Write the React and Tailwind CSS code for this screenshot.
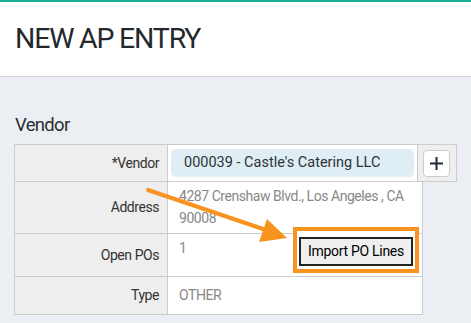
import React from "react";

const font = { fontFamily: "Roboto, 'Liberation Sans', sans-serif" };

const Label = ({ children, className = "" }) => (
  <div
    className={`w-[154px] shrink-0 border border-[#cccccc] bg-[#eeeeee] flex items-center justify-end pr-[8px] text-[14px] tracking-[-0.45px] text-[#333333] ${className}`}
  >
    {children}
  </div>
);

const Arrow = () => (
  <svg
    className="absolute left-0 top-0 pointer-events-none"
    width="471"
    height="323"
    viewBox="0 0 471 323"
  >
    <line x1="148" y1="190" x2="266" y2="230" stroke="#f7931e" strokeWidth="4" strokeLinecap="round" />
    <polygon points="259,242 267,219 287,238" fill="#f7931e" />
  </svg>
);

export default function App() {
  return (
    <div className="relative w-[471px] h-[323px] overflow-hidden bg-[#ebeef3]" style={font}>
      <div className="h-[2px] bg-[#17b396]" />
      <header className="h-[75px] bg-white border-b border-[#d5d5d5] flex items-center px-[15px]">
        <h1 className="text-[28.5px] leading-none text-[#24282c] tracking-[-1.2px]">NEW AP ENTRY</h1>
      </header>

      <section className="px-[14px] pt-[37px]">
        <h2 className="text-[18.5px] leading-[23px] text-[#2a2d31] pl-[1px] mb-[7px] tracking-[-0.7px]">Vendor</h2>

        <div className="flex h-[38px]">
          <Label className="pr-[4px]">*Vendor</Label>
          <div className="w-[256px] -ml-px border border-[#cccccc] bg-white px-[3px] py-[4px]">
            <div className="h-full rounded-[5px] bg-[#dfeef4] flex items-center pl-[13px] text-[14.5px] text-[#2f3337]">
              000039 - Castle's Catering LLC
            </div>
          </div>
          <div className="w-[41px] -ml-px border border-[#cccccc] bg-[#eeeeee] flex items-center justify-center">
            <button className="w-[27px] h-[27px] rounded-[4px] border border-[#cccccc] bg-white flex items-center justify-center">
              <svg width="15" height="15" viewBox="0 0 15 15">
                <path d="M7.5 1v13M1 7.5h13" stroke="#1f2a36" strokeWidth="2" />
              </svg>
            </button>
          </div>
        </div>

        <div className="flex h-[53px] -mt-px">
          <Label>Address</Label>
          <div className="w-[256px] -ml-px border border-[#cccccc] bg-white pl-[11px] pr-[4px] pt-[3px] text-[14px] leading-[22px] tracking-[-0.45px] text-[#888888]">
            4287 Crenshaw Blvd., Los Angeles , CA 90008
          </div>
        </div>

        <div className="flex h-[44px] -mt-px">
          <Label>Open POs</Label>
          <div className="w-[256px] -ml-px border border-[#cccccc] bg-white pl-[11px] pr-[9px] pt-[3px] flex justify-between items-start">
            <span className="text-[14px] leading-[22px] text-[#888888]">1</span>
            <button className="relative z-10 w-[114px] h-[29px] border-2 border-[#222222] bg-[#efefef] text-[14px] tracking-[-0.3px] text-black">
              Import PO Lines
            </button>
          </div>
        </div>

        <div className="flex h-[39px] -mt-px">
          <Label>Type</Label>
          <div className="w-[256px] -ml-px border border-[#cccccc] bg-white pl-[11px] flex items-center text-[14px] tracking-[-0.45px] text-[#888888]">
            OTHER
          </div>
        </div>
      </section>

      <div className="absolute left-[293px] top-[227px] w-[126px] h-[46px] border-4 border-[#f7931e] bg-white" />
      <Arrow />
    </div>
  );
}
